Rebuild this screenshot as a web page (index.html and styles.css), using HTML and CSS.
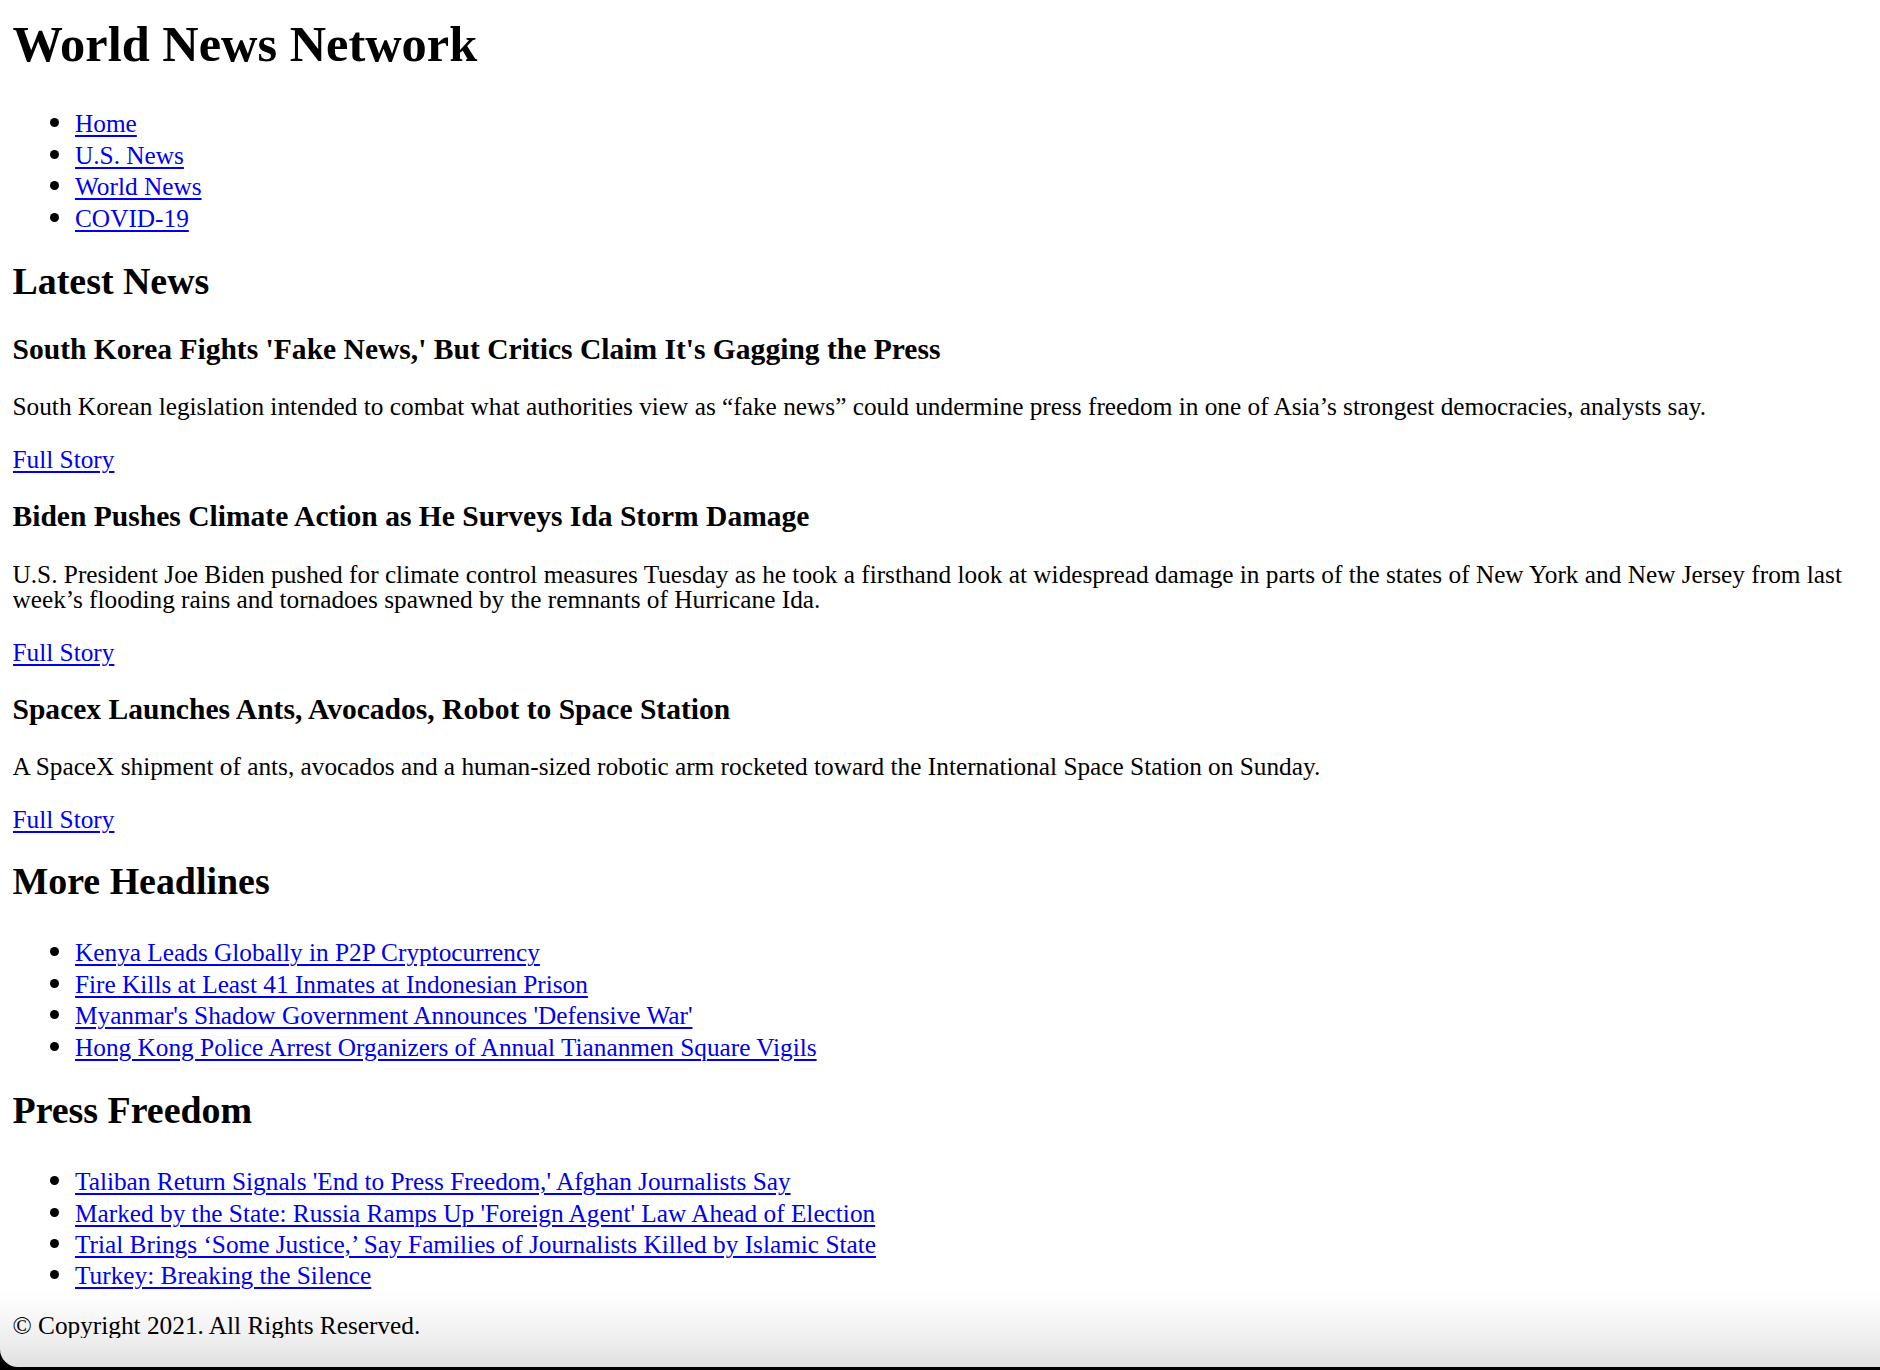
FILE: index.html
```html
<!DOCTYPE html>
<html lang="en">
<head>
<meta charset="utf-8">
<title>World News Network</title>
<link rel="stylesheet" href="styles.css">
</head>
<body>
<header class="site-header">
  <h1 class="site-title">World News Network</h1>
  <nav>
    <ul class="link-list nav-list">
      <li><a href="#">Home</a></li>
      <li><a href="#">U.S. News</a></li>
      <li><a href="#">World News</a></li>
      <li><a href="#">COVID-19</a></li>
    </ul>
  </nav>
</header>
<main>
  <section class="latest">
    <h2 class="section-title">Latest News</h2>
    <article class="story">
      <h3 class="story-title">South Korea Fights 'Fake News,' But Critics Claim It's Gagging the Press</h3>
      <p class="story-text">South Korean legislation intended to combat what authorities view as “fake news” could undermine press freedom in one of Asia’s strongest democracies, analysts say.</p>
      <p class="story-link"><a href="#">Full Story</a></p>
    </article>
    <article class="story">
      <h3 class="story-title">Biden Pushes Climate Action as He Surveys Ida Storm Damage</h3>
      <p class="story-text">U.S. President Joe Biden pushed for climate control measures Tuesday as he took a firsthand look at widespread damage in parts of the states of New York and New Jersey from last week’s flooding rains and tornadoes spawned by the remnants of Hurricane Ida.</p>
      <p class="story-link"><a href="#">Full Story</a></p>
    </article>
    <article class="story">
      <h3 class="story-title">Spacex Launches Ants, Avocados, Robot to Space Station</h3>
      <p class="story-text">A SpaceX shipment of ants, avocados and a human-sized robotic arm rocketed toward the International Space Station on Sunday.</p>
      <p class="story-link"><a href="#">Full Story</a></p>
    </article>
  </section>
  <section class="headlines">
    <h2 class="section-title">More Headlines</h2>
    <ul class="link-list">
      <li><a href="#">Kenya Leads Globally in P2P Cryptocurrency</a></li>
      <li><a href="#">Fire Kills at Least 41 Inmates at Indonesian Prison</a></li>
      <li><a href="#">Myanmar's Shadow Government Announces 'Defensive War'</a></li>
      <li><a href="#">Hong Kong Police Arrest Organizers of Annual Tiananmen Square Vigils</a></li>
    </ul>
  </section>
  <section class="headlines">
    <h2 class="section-title">Press Freedom</h2>
    <ul class="link-list">
      <li><a href="#">Taliban Return Signals 'End to Press Freedom,' Afghan Journalists Say</a></li>
      <li><a href="#">Marked by the State: Russia Ramps Up 'Foreign Agent' Law Ahead of Election</a></li>
      <li><a href="#">Trial Brings ‘Some Justice,’ Say Families of Journalists Killed by Islamic State</a></li>
      <li><a href="#">Turkey: Breaking the Silence</a></li>
    </ul>
  </section>
</main>
<footer class="site-footer">
  <p class="copyright">© Copyright 2021. All Rights Reserved.</p>
</footer>
<div class="window-edge" aria-hidden="true"><div class="window-inner"></div></div>
</body>
</html>
```

FILE: styles.css
```css
html, body {
  background: #fff;
}
body {
  margin: 0 12.5px;
  font-family: "Liberation Serif", "Times New Roman", serif;
  font-size: 25.3px;
  color: #000;
}
a {
  color: #0000ee;
  text-decoration: underline;
  text-decoration-thickness: 1.5px;
  text-underline-offset: 3px;
}
h1, h2, h3, p, ul {
  margin: 0;
}
.site-title {
  font-size: 50.4px;
  font-weight: bold;
  line-height: 57.5px;
  padding-top: 16px;
}
.link-list {
  padding-left: 62.5px;
  list-style: disc;
}
.link-list li {
  line-height: 29.7px;
}
.headlines .link-list li {
  line-height: 29.4px;
}
.link-list li::marker {
  font-size: 30px;
}
.nav-list {
  margin-top: 33.5px;
}
.section-title {
  font-size: 37.9px;
  font-weight: bold;
  line-height: 43px;
  margin-top: 26.5px;
}
.headlines .section-title {
  margin-top: 27.5px;
}
.headlines + .headlines .section-title {
  margin-top: 26.5px;
}
.headlines .link-list {
  margin-top: 33.5px;
}
.story-title {
  font-size: 29.55px;
  font-weight: bold;
  line-height: 33.6px;
  margin-top: 28px;
}
.latest > .story:first-of-type .story-title {
  margin-top: 29.4px;
}
.story-text,
.story-link {
  line-height: 25px;
  margin-top: 28px;
}
.site-footer {
  margin-top: 22px;
}
.copyright {
  line-height: 25px;
}
.window-edge {
  position: fixed;
  inset: 0;
  overflow: hidden;
  pointer-events: none;
}
.window-inner {
  position: absolute;
  left: 0;
  right: -80px;
  top: -80px;
  bottom: 3px;
  border-bottom-left-radius: 18px;
  box-shadow: 0 0 0 80px #000;
  background: linear-gradient(to bottom, rgba(0,0,0,0) calc(100% - 78px), rgba(0,0,0,0.025) calc(100% - 55px), rgba(0,0,0,0.07) calc(100% - 25px), rgba(0,0,0,0.12) 100%);
}
```
